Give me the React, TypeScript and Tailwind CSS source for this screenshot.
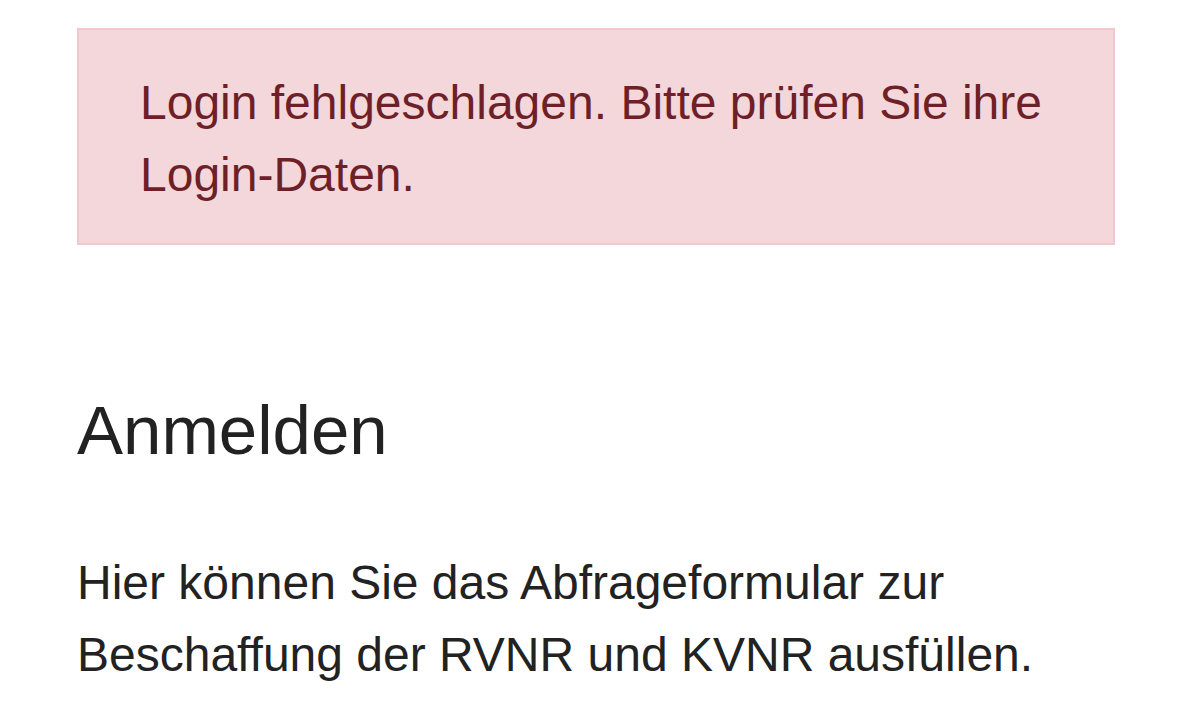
import React from "react";

export default function App() {
  return (
    <div className="h-[708px] w-full overflow-hidden bg-white font-['Liberation_Sans',Arial,sans-serif] text-[#212529]">
      <div className="pl-[77px] pr-[85px] pt-[28px]">
        <div className="border-2 border-[#f0c8ce] bg-[#f4d7db] px-[61px] pt-[37px] pb-[32px] text-[48px] leading-[72px] text-[#6e1f28]">
          Login fehlgeschlagen. Bitte prüfen Sie ihre Login-Daten.
        </div>

        <h1 className="mt-[144px] text-[69px] leading-[84px] font-normal text-[#222]">Anmelden</h1>

        <p className="mt-[74px] text-[48px] leading-[72px] text-[#222]">
          Hier können Sie das Abfrageformular zur Beschaffung der RVNR und KVNR ausfüllen.
          Bitte geben Sie auch für Ihr Aktenzeichen an, welche Daten benötigt werden.
        </p>
      </div>
    </div>
  );
}
